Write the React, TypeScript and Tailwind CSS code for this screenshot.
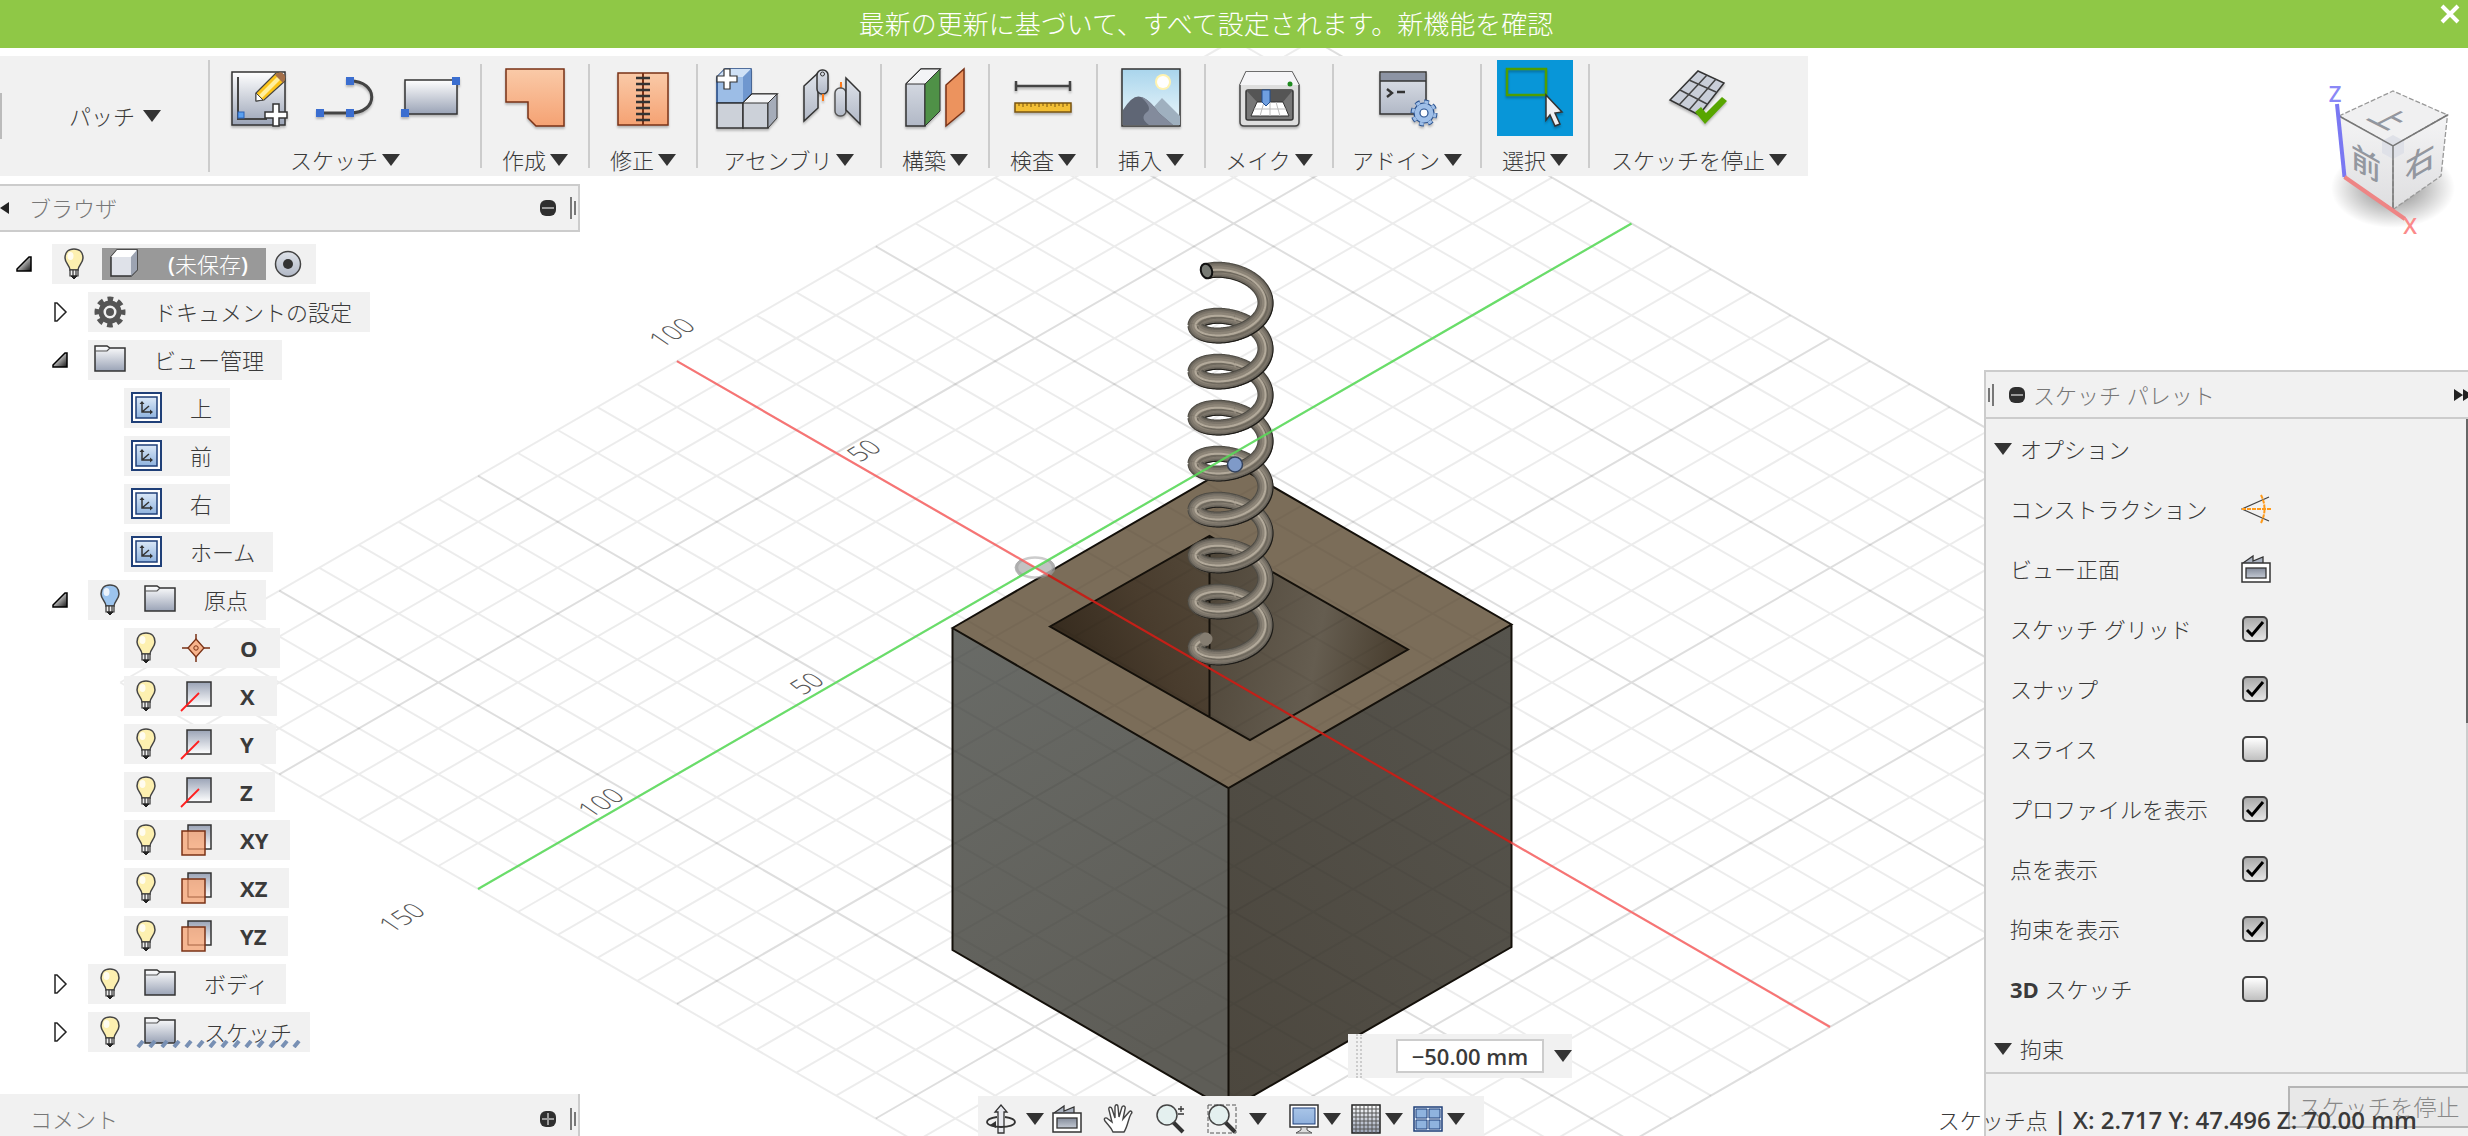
import React from 'react';

// ---------- Small shared glyphs ----------

// Solid downward arrow used next to every drop-down label
const Caret: React.FC = () => (
  <svg width="18" height="12" viewBox="0 0 18 12" className="shrink-0">
    <path d="M0 0H18L9 12Z" fill="#333" />
  </svg>
);

// Round collapse / expand badge in the panel headers
const RoundBadge: React.FC<{ plus?: boolean }> = ({ plus }) => (
  <svg width="16" height="16" viewBox="0 0 16 16">
    <rect width="16" height="16" rx="6" fill="#2f2f2f" />
    <path d={plus ? 'M2 8H14M8 2V14' : 'M2 8H14'} stroke="#9a9a9a" strokeWidth="2" />
  </svg>
);

// Two vertical bars used as a resize grip
const Grip: React.FC<{ flip?: boolean }> = ({ flip }) => (
  <svg width="6" height="22" viewBox="0 0 6 22">
    <path d={flip ? 'M1 4V18M5 0V22' : 'M1 0V22M5 4V18'} stroke="#777" strokeWidth="2" />
  </svg>
);

// ---------- Toolbar icons (60 x 60) ----------

const ICONS: Record<string, React.ReactNode> = {
  sketch: (
    <>
      <rect x="3" y="4" width="53" height="53" fill="url(#steel)" stroke="#333" strokeWidth="1.5" />
      <path d="M9 9V51H38" fill="none" stroke="#444" strokeWidth="2" />
      <rect x="9" y="44" width="6" height="6" fill="#5aa0f0" stroke="#2b62b8" />
      <path d="M27 25L47 5Q52 3 56 9V13L35 32L27 33Z" fill="#fcc419" stroke="#444" strokeWidth="1.2" />
      <path d="M30 27L49 8L52 11L33 30Z" fill="#fff0a0" />
      <path d="M46 7Q52 1 56 8Q57 11 54 15Z" fill="#a5704a" />
      <path d="M27 25L34 32L27 33Z" fill="#fff" stroke="#444" />
      <path d="M44 36H50V44H58V50H50V58H44V50H36V44H44Z" fill="#fff" stroke="#333" strokeWidth="1.5" />
    </>
  ),
  arc: (
    <>
      <path d="M5 45H35C64 45 64 13 35 13" fill="none" stroke="#444" strokeWidth="3" />
      <path d="M1 41h8v8h-8zM31 41h8v8h-8zM31 9h8v8h-8z" fill="#3b6ed0" />
    </>
  ),
  rect: (
    <>
      <rect x="4" y="12" width="52" height="34" fill="url(#steel)" stroke="#333" strokeWidth="1.5" />
      <path d="M0 41h8v8h-8zM51 9h8v8h-8z" fill="#3b6ed0" />
    </>
  ),
  create: <path d="M1 1H59V58H31L23 50V34H1Z" fill="url(#peach)" stroke="#7a3216" strokeWidth="1.5" />,
  modify: (
    <>
      <rect x="5" y="5" width="50" height="52" fill="url(#peach)" stroke="#7a3216" strokeWidth="1.5" />
      <path d="M30 5V57" stroke="#7a3216" strokeWidth="2" />
      <path d="M23 10H37M23 16H37M23 22H37M23 28H37M23 34H37M23 40H37M23 46H37M23 52H37" stroke="#333" strokeWidth="2.4" />
    </>
  ),
  component: (
    <>
      <path d="M1 9L9 1H35V26L27 35H1Z" fill="#9cbde6" stroke="#1d4482" strokeWidth="1.5" />
      <path d="M1 9L9 1H35L27 9Z" fill="#cfe1f6" />
      <path d="M27 9L35 1V26L27 35Z" fill="#6f97cf" />
      <path d="M1 35H27V60H1Z" fill="#ccd1d9" stroke="#333" strokeWidth="1.5" />
      <path d="M27 35L36 26H61L52 35V60H27Z" fill="#ccd1d9" stroke="#333" strokeWidth="1.5" />
      <path d="M27 35L36 26H61L52 35Z" fill="#f4f5f7" stroke="#333" strokeWidth="1" />
      <path d="M52 35L61 26V50L52 60Z" fill="#a5acb9" stroke="#333" strokeWidth="1" />
      <path d="M8 1H14V8H21V14H14V21H8V14H1V8H8Z" fill="#fff" stroke="#333" strokeWidth="1.2" />
    </>
  ),
  joint: (
    <>
      <path d="M2 18L16 5V40L2 53Z" fill="url(#plate)" stroke="#333" strokeWidth="1.5" />
      <rect x="15" y="2" width="11" height="24" rx="5" fill="url(#plate)" stroke="#333" strokeWidth="1.5" />
      <circle cx="20.500" cy="6" r="2" fill="none" stroke="#333" />
      <path d="M21 26V33M39 14V24" stroke="#ff7a1a" strokeWidth="2" />
      <rect x="33" y="20" width="11" height="28" rx="5" fill="url(#plate)" stroke="#555" strokeWidth="1.5" />
      <path d="M44 10L58 24V56L44 42Z" fill="url(#plate)" stroke="#333" strokeWidth="1.5" />
    </>
  ),
  construct: (
    <>
      <path d="M1 16L16 1H35L20 16V58H1Z" fill="url(#plate)" stroke="#333" strokeWidth="1.5" />
      <path d="M1 16L16 1H35L20 16Z" fill="#f3f4f6" stroke="#333" strokeWidth="1" />
      <path d="M20 16L35 1V43L20 58Z" fill="#4f9147" stroke="#333" strokeWidth="1" />
      <path d="M41 17L59 1V43L41 58Z" fill="#ec935e" stroke="#7a3216" strokeWidth="1.5" />
    </>
  ),
  inspect: (
    <>
      <path d="M3 18H57M3 13V23M57 13V23" stroke="#444" strokeWidth="2.500" />
      <rect x="2" y="35" width="56" height="9" fill="#f3bf35" stroke="#7a5410" strokeWidth="1.500" />
      <path d="M6 35v3M10 35v4M14 35v3M18 35v4M22 35v3M26 35v4M30 35v3M34 35v4M38 35v3M42 35v4M46 35v3M50 35v4M54 35v3" stroke="#7a5410" />
    </>
  ),
  insert: (
    <>
      <rect x="1" y="1" width="58" height="57" fill="url(#sky)" stroke="#333" strokeWidth="1.500" />
      <circle cx="42" cy="14" r="8" fill="#fff3b0" />
      <circle cx="42" cy="14" r="6" fill="#fff" />
      <path d="M30 42L41 30L59 48V57H38Z" fill="#9fb0bf" />
      <path d="M2 42Q12 26 20 29Q27 30 38 45L52 57H2Z" fill="#5f6675" />
      <path d="M20 29Q27 30 38 45L52 57H28Q18 50 26 44Q32 40 20 29Z" fill="#838b9c" />
    </>
  ),
  make: (
    <>
      <path d="M7 4H53L60 17V54Q60 58 56 58H5Q1 58 1 54V17Z" fill="#dedede" stroke="#444" strokeWidth="1.500" />
      <path d="M7 4H53L60 17H1Z" fill="#f5f5f7" />
      <circle cx="51" cy="16" r="2.500" fill="#1e8a1e" />
      <rect x="7" y="22" width="47" height="30" rx="2" fill="#777" stroke="#333" strokeWidth="1.500" />
      <path d="M7 22H54L44 34H18Z" fill="#555" />
      <path d="M18 34H44L50 48H12Z" fill="#fff" stroke="#333" />
      <path d="M15 41H47M25 34L21 48M31 34V48M37 34L41 48" stroke="#bbb" />
      <path d="M23 22H31V34L27 38L23 34Z" fill="#6f9fe0" stroke="#234f90" />
    </>
  ),
  addin: (
    <>
      <rect x="3" y="4" width="46" height="42" fill="url(#plate)" stroke="#333" strokeWidth="1.500" />
      <rect x="4" y="5" width="44" height="8" fill="#8d94a4" />
      <path d="M3 13H49" stroke="#333" strokeWidth="1.500" />
      <path d="M10 21L15 25L10 29M20 24H28" fill="none" stroke="#333" strokeWidth="2.400" />
      <circle cx="47" cy="45" r="11" fill="none" stroke="#29518f" strokeWidth="5" strokeDasharray="4.600 4" />
      <circle cx="47" cy="45" r="10" fill="#9fbfe8" stroke="#29518f" strokeWidth="1.200" />
      <circle cx="47" cy="45" r="11" fill="none" stroke="#9fbfe8" strokeWidth="3" strokeDasharray="4 4.600" strokeDashoffset="-0.300" />
      <circle cx="47" cy="45" r="4" fill="#fff" stroke="#29518f" strokeWidth="1.200" />
    </>
  ),
  select: (
    <>
      <rect x="2" y="1" width="39" height="26" fill="none" stroke="#4f9d00" strokeWidth="2.500" />
      <path d="M41 27L57 44L50 45L55 56L50 58L45 47L41 52Z" fill="#f0f0f3" stroke="#333" strokeWidth="1.500" />
    </>
  ),
  stop: (
    <>
      <path d="M29 3L55 15L30 47L1 32Z" fill="#c9ced8" stroke="#333" strokeWidth="1.500" />
      <path d="M20 12L47 24M11 22L38 36M38 7L10 37M47 11L20 42" stroke="#444" strokeWidth="1.500" />
      <path d="M26 44L32 39L37 45L53 29L58 33L36 56Z" fill="#58a600" />
    </>
  ),
};

interface ToolGroup {
  label: string;
  icons: string[];
  width: string;
  active?: boolean;
}

const TOOL_GROUPS: ToolGroup[] = [
  { label: 'スケッチ', icons: ['sketch', 'arc', 'rect'], width: 'w-[272px]' },
  { label: '作成', icons: ['create'], width: 'w-[108px]' },
  { label: '修正', icons: ['modify'], width: 'w-[108px]' },
  { label: 'アセンブリ', icons: ['component', 'joint'], width: 'w-[184px]' },
  { label: '構築', icons: ['construct'], width: 'w-[108px]' },
  { label: '検査', icons: ['inspect'], width: 'w-[108px]' },
  { label: '挿入', icons: ['insert'], width: 'w-[108px]' },
  { label: 'メイク', icons: ['make'], width: 'w-[128px]' },
  { label: 'アドイン', icons: ['addin'], width: 'w-[148px]' },
  { label: '選択', icons: ['select'], width: 'w-[108px]', active: true },
  { label: 'スケッチを停止', icons: ['stop'], width: 'w-[220px]' },
];

const Toolbar: React.FC = () => (
  <nav className="mt-2 flex h-[120px] w-fit items-stretch bg-[#f1f1f1]">
    <div className="my-auto h-[46px] w-[2px] bg-[#bbb]" />
    <div className="flex w-[206px] items-center justify-center pl-7 pr-2">
      <button className="flex items-center gap-2 text-[22px] leading-8">
        パッチ <Caret />
      </button>
    </div>
    {TOOL_GROUPS.map((group, index) => (
      <div key={group.label} className={`flex pt-1 ${group.width}`}>
        <div className={index === 0 ? 'mb-1 w-[2px] bg-[#ccc]' : 'mb-2 mt-1 w-[2px] bg-[#ccc]'} />
        <div className="flex flex-1 flex-col items-center">
          <div className="flex h-[76px] shrink-0 items-center justify-center gap-[26px]">
            {group.icons.map((icon) => (
              <button
                key={icon}
                aria-label={icon}
                className={group.active ? 'flex size-[76px] items-center justify-center bg-[#0896d8]' : 'flex items-center'}
              >
                <svg width="60" height="60" viewBox="0 0 60 60" className="overflow-visible drop-shadow-[0_2px_1px_rgba(0,0,0,0.25)]">
                  {ICONS[icon]}
                </svg>
              </button>
            ))}
          </div>
          <button className="mt-2 flex items-center gap-1 text-[22px] leading-8">
            {group.label}
            <Caret />
          </button>
        </div>
      </div>
    ))}
  </nav>
);

// ---------- Browser tree ----------

const Bulb: React.FC<{ blue?: boolean }> = ({ blue }) => (
  <svg width="32" height="32" viewBox="0 0 32 32">
    <path d="M16 1C10 1 7 5 7 10C7 15 12 18 12 22H20C20 18 25 15 25 10C25 5 22 1 16 1Z" fill={blue ? '#9cc4ee' : '#fdf0b0'} stroke="#444" strokeWidth="1.500" />
    <ellipse cx="12.500" cy="8" rx="3" ry="4" fill="#fff" opacity="0.800" />
    <path d="M12 22H20V28H12ZM15 22V28M18 22V28" fill="#eee" stroke="#333" strokeWidth="1.200" />
    <path d="M13 28H19L16 31Z" fill="#222" stroke="#222" />
  </svg>
);

const Folder: React.FC = () => (
  <svg width="32" height="32" viewBox="0 0 32 32">
    <path d="M1 27V2H13L16 4H31V27Z" fill="url(#steel)" stroke="#333" strokeWidth="1.500" />
    <path d="M1 7H13L16 4" fill="none" stroke="#555" strokeWidth="1.200" />
  </svg>
);

const Gear: React.FC = () => (
  <svg width="32" height="32" viewBox="0 0 32 32">
    <circle cx="16" cy="16" r="13" fill="none" stroke="#555" strokeWidth="5" strokeDasharray="5.600 4.610" strokeDashoffset="2.800" />
    <circle cx="16" cy="16" r="9" fill="none" stroke="#555" strokeWidth="5" />
    <circle cx="16" cy="16" r="4" fill="#555" />
  </svg>
);

const ViewIcon: React.FC = () => (
  <svg width="32" height="32" viewBox="0 0 32 32">
    <rect x="2" y="1" width="29" height="29" fill="#fff" stroke="#1f3f78" strokeWidth="2" />
    <rect x="6" y="5" width="21" height="21" fill="url(#blue)" stroke="#1f3f78" strokeWidth="1.500" />
    <path d="M12 10V20H22M12 20L19 14" fill="none" stroke="#333" strokeWidth="1.500" />
    <path d="M9.500 12L12 9L14.500 12ZM20 17.500L23 20L20 22.500Z" fill="#333" />
  </svg>
);

const OriginIcon: React.FC = () => (
  <svg width="32" height="32" viewBox="0 0 32 32">
    <path d="M16 2V30M2 16H30" stroke="#7a3216" strokeWidth="1.500" />
    <path d="M16 7L24 16L16 25L8 16Z" fill="#f8b48c" stroke="#7a3216" strokeWidth="1.300" />
    <circle cx="16" cy="16" r="2.200" fill="none" stroke="#7a3216" />
  </svg>
);

const AxisIcon: React.FC = () => (
  <svg width="32" height="32" viewBox="0 0 32 32">
    <rect x="7" y="2" width="24" height="24" fill="url(#steelUp)" stroke="#333" strokeWidth="1.500" />
    <path d="M1 31L19 13" stroke="#ff1e1e" strokeWidth="1.800" />
  </svg>
);

const PlaneIcon: React.FC = () => (
  <svg width="32" height="32" viewBox="0 0 32 32">
    <rect x="8" y="1" width="23" height="24" fill="url(#steelUp)" stroke="#333" strokeWidth="1.500" />
    <rect x="2" y="7" width="23" height="24" fill="#f6ab80" fillOpacity="0.850" stroke="#7a3216" strokeWidth="1.500" />
    <path d="M8 7V25H25" fill="none" stroke="#7a3216" strokeOpacity="0.350" />
  </svg>
);

const CubeIcon: React.FC = () => (
  <svg width="32" height="32" viewBox="0 0 32 32">
    <path d="M3 9L9 2H29V22L23 28H3Z" fill="#dfe2e9" stroke="#333" strokeWidth="1.500" />
    <path d="M3 9L9 2H29L23 9Z" fill="#fff" />
    <path d="M23 9L29 2V22L23 28Z" fill="#9ca3b1" />
  </svg>
);

// Open nodes get a filled corner, closed nodes an outlined arrow
const Expander: React.FC<{ open?: boolean }> = ({ open }) =>
  open ? (
    <svg width="16" height="16" viewBox="0 0 16 16">
      <path d="M1 14V13L13 1H15V15H1Z" fill="url(#corner)" stroke="#000" strokeWidth="1.500" />
    </svg>
  ) : (
    <svg width="16" height="20" viewBox="0 0 16 20">
      <path d="M3 1H5L14 10L5 19H3Z" fill="#fff" stroke="#222" strokeWidth="1.500" />
    </svg>
  );

interface TreeRow {
  label: string;
  level: number;
  open?: boolean;
  bulb?: 'yellow' | 'blue';
  icon: React.ReactNode;
  latin?: boolean;
  hatched?: boolean;
}

const TREE: TreeRow[] = [
  { label: 'ドキュメントの設定', level: 1, open: false, icon: <Gear /> },
  { label: 'ビュー管理', level: 1, open: true, icon: <Folder /> },
  { label: '上', level: 2, icon: <ViewIcon /> },
  { label: '前', level: 2, icon: <ViewIcon /> },
  { label: '右', level: 2, icon: <ViewIcon /> },
  { label: 'ホーム', level: 2, icon: <ViewIcon /> },
  { label: '原点', level: 1, open: true, bulb: 'blue', icon: <Folder /> },
  { label: 'O', level: 2, bulb: 'yellow', icon: <OriginIcon />, latin: true },
  { label: 'X', level: 2, bulb: 'yellow', icon: <AxisIcon />, latin: true },
  { label: 'Y', level: 2, bulb: 'yellow', icon: <AxisIcon />, latin: true },
  { label: 'Z', level: 2, bulb: 'yellow', icon: <AxisIcon />, latin: true },
  { label: 'XY', level: 2, bulb: 'yellow', icon: <PlaneIcon />, latin: true },
  { label: 'XZ', level: 2, bulb: 'yellow', icon: <PlaneIcon />, latin: true },
  { label: 'YZ', level: 2, bulb: 'yellow', icon: <PlaneIcon />, latin: true },
  { label: 'ボディ', level: 1, open: false, bulb: 'yellow', icon: <Folder /> },
  { label: 'スケッチ', level: 1, open: false, bulb: 'yellow', icon: <Folder />, hatched: true },
];

const BrowserTree: React.FC = () => (
  <ul className="mt-3 flex flex-col gap-2">
    <li className="flex h-10 items-center pl-4">
      <Expander open />
      <div className="ml-5 flex h-10 items-center bg-[#f1f1f1] pl-[6px] pr-[14px]">
        <Bulb />
        <div className="ml-3 flex h-8 items-center bg-[#999] pl-[6px] pr-[18px] text-[22px] text-white">
          <CubeIcon />
          <span className="ml-7 leading-8">
            <b className="font-semibold">(</b>未保存<b className="font-semibold">)</b>
          </span>
        </div>
        <svg width="28" height="28" viewBox="0 0 28 28" className="ml-2">
          <circle cx="14" cy="14" r="12.500" fill="url(#plate)" stroke="#444" strokeWidth="1.500" />
          <circle cx="14" cy="14" r="5" fill="#333" />
        </svg>
      </div>
    </li>
    {TREE.map((row) => (
      <li key={row.label} className="flex h-10 items-center pl-[52px]">
        <div className="flex w-9 items-center">{row.level === 1 && <Expander open={row.open} />}</div>
        <div
          className={`relative flex h-10 items-center bg-[#f1f1f1] pl-[6px] text-[22px] ${row.latin ? 'pr-[22px]' : 'pr-[18px]'} ${row.level === 2 ? 'ml-9' : ''}`}
        >
          {row.bulb && (
            <span className="mr-[18px]">
              <Bulb blue={row.bulb === 'blue'} />
            </span>
          )}
          {row.icon}
          <span className={`ml-7 leading-8 ${row.latin ? 'font-bold' : ''}`}>{row.label}</span>
          {row.hatched && (
            <svg width="168" height="8" viewBox="0 0 168 8" className="absolute bottom-1 left-12">
              <path
                d="M2 7L7 1M14 7L19 1M26 7L31 1M38 7L43 1M50 7L55 1M62 7L67 1M74 7L79 1M86 7L91 1M98 7L103 1M110 7L115 1M122 7L127 1M134 7L139 1M146 7L151 1M158 7L163 1"
                stroke="#7890b4"
                strokeWidth="4"
              />
            </svg>
          )}
        </div>
      </li>
    ))}
  </ul>
);

const LeftPanel: React.FC = () => (
  <aside className="mt-2 flex w-[580px] flex-1 flex-col">
    <header className="flex h-12 items-center border-y-2 border-r-2 border-[#ccc] bg-[#f1f1f1] text-[22px] text-[#777]">
      <svg width="9" height="12" viewBox="0 0 9 12">
        <path d="M9 0V12L0 6Z" fill="#222" />
      </svg>
      <h2 className="ml-5 flex-1 leading-8">ブラウザ</h2>
      <RoundBadge />
      <span className="ml-[14px] mr-[2px]">
        <Grip />
      </span>
    </header>
    <BrowserTree />
    <header className="mt-auto flex h-[42px] items-center border-r-2 border-[#ccc] bg-[#f1f1f1] pt-2 text-[22px] text-[#777]">
      <h2 className="ml-[30px] flex-1 leading-8">コメント</h2>
      <RoundBadge plus />
      <span className="ml-[14px] mr-[2px]">
        <Grip />
      </span>
    </header>
  </aside>
);

// ---------- Navigation bar ----------

const LookAt: React.FC = () => (
  <svg width="30" height="30" viewBox="0 0 30 30">
    <path d="M2 9L12 2V7L22 3V9" fill="#aab2c0" stroke="#333" strokeWidth="1.300" />
    <rect x="1" y="9" width="28" height="19" fill="#fff" stroke="#333" strokeWidth="1.500" />
    <rect x="5" y="14" width="20" height="10" fill="url(#steelDark)" stroke="#333" strokeWidth="1.300" />
  </svg>
);

const Magnifier: React.FC<{ boxed?: boolean }> = ({ boxed }) => (
  <svg width="30" height="30" viewBox="0 0 30 30">
    {boxed && <path d="M1 1H29V29H1Z" fill="none" stroke="#555" strokeDasharray="4 2" />}
    <path d="M18 18L28 28" stroke="#333" strokeWidth="4" />
    <circle cx="12" cy="11" r="10" fill="#e4f0ef" stroke="#444" strokeWidth="1.500" />
    {!boxed && <path d="M23 5H29M26 2V8M23 10H29" stroke="#333" strokeWidth="1.300" />}
  </svg>
);

const NavBar: React.FC = () => (
  <div className="flex h-10 w-[506px] items-center bg-[#f1f1f1] pl-2 pt-[6px]">
    <button aria-label="orbit">
      <svg width="30" height="30" viewBox="0 0 30 30">
        <path d="M12 29V8H9L15 1L21 8H18V29Z" fill="#e8e9ee" stroke="#333" strokeWidth="1.300" />
        <path d="M11 13C4 14 1 16 1 18C1 21 8 23 15 23C23 23 29 21 29 18C29 16 26 14 19 13" fill="none" stroke="#333" strokeWidth="1.800" />
        <path d="M4 21L10 17V24Z" fill="#333" />
      </svg>
    </button>
    <button aria-label="orbit menu" className="ml-[10px]"><Caret /></button>
    <button aria-label="look at" className="ml-2"><LookAt /></button>
    <button aria-label="pan" className="ml-[21px]">
      <svg width="30" height="30" viewBox="0 0 30 30">
        <path
          d="M10 28C8 23 5 21 2 17C0 14 3 13 5 15L9 18L6 6C5 3 8 2 9 5L12 14L12 3C12 0 15 0 15 3L16 13L19 3C20 1 23 2 22 5L20 15L26 8C28 6 30 8 28 10C25 15 25 22 21 28Z"
          fill="#fff"
          stroke="#444"
          strokeWidth="1.400"
        />
      </svg>
    </button>
    <button aria-label="zoom" className="ml-[22px]"><Magnifier /></button>
    <button aria-label="zoom window" className="ml-[22px]"><Magnifier boxed /></button>
    <button aria-label="zoom menu" className="ml-3"><Caret /></button>
    <button aria-label="display" className="ml-[22px]">
      <svg width="30" height="30" viewBox="0 0 30 30">
        <rect x="1" y="1" width="28" height="22" fill="#fff" stroke="#333" strokeWidth="1.500" />
        <rect x="4" y="4" width="22" height="16" fill="url(#blueFlat)" stroke="#1f3f78" />
        <path d="M12 23H18V26L23 29H7L12 26Z" fill="#ddd" stroke="#555" />
      </svg>
    </button>
    <button aria-label="display menu" className="ml-1"><Caret /></button>
    <button aria-label="grid" className="ml-[10px]">
      <svg width="30" height="30" viewBox="0 0 30 30">
        <rect x="1" y="1" width="28" height="28" fill="url(#steel)" stroke="#222" strokeWidth="1.500" />
        <path d="M5 1V29M9 1V29M13 1V29M17 1V29M21 1V29M25 1V29M1 5H29M1 9H29M1 13H29M1 17H29M1 21H29M1 25H29" stroke="#555" />
      </svg>
    </button>
    <button aria-label="grid menu" className="ml-1"><Caret /></button>
    <button aria-label="viewports" className="ml-[10px]">
      <svg width="30" height="30" viewBox="0 0 30 30">
        <rect x="1" y="3" width="28" height="24" fill="#dce8f6" stroke="#1f3f78" strokeWidth="1.500" />
        <path d="M3 5h11v9h-11zM16 5h11v9h-11zM3 16h11v9h-11zM16 16h11v9h-11z" fill="#8fb3de" stroke="#1f3f78" />
      </svg>
    </button>
    <button aria-label="viewports menu" className="ml-1"><Caret /></button>
  </div>
);

// ---------- Sketch palette ----------

const OPTIONS = [
  { id: 'grid', label: 'スケッチ グリッド', checked: true },
  { id: 'snap', label: 'スナップ', checked: true },
  { id: 'slice', label: 'スライス', checked: false },
  { id: 'profile', label: 'プロファイルを表示', checked: true },
  { id: 'points', label: '点を表示', checked: true },
  { id: 'constraints', label: '拘束を表示', checked: true },
];

const OptionCheck: React.FC<{ id: string; label: React.ReactNode; checked: boolean }> = ({ id, label, checked }) => (
  <div className="flex h-[60px] items-center">
    <label htmlFor={id} className="w-[232px] leading-8">
      {label}
    </label>
    <span className="relative flex">
      <input
        id={id}
        type="checkbox"
        defaultChecked={checked}
        className="peer size-[26px] appearance-none rounded-[5px] border-2 border-[#444] bg-linear-to-b from-white to-[#c0c0c0] checked:from-[#aaa] checked:to-[#e6e6e6]"
      />
      <svg width="26" height="26" viewBox="0 0 26 26" className="pointer-events-none absolute inset-0 hidden peer-checked:block">
        <path d="M5 14L10 19L21 6" fill="none" stroke="#000" strokeWidth="3" />
      </svg>
    </span>
  </div>
);

const SketchPalette: React.FC = () => (
  <aside className="mt-[194px] flex min-h-0 w-[484px] flex-1 flex-col border-l-2 border-t-2 border-[#ccc] bg-[#f1f1f1] text-[22px]">
    <header className="flex h-[47px] shrink-0 items-center border-b-2 border-[#ccc] pl-[2px] text-[#777]">
      <Grip flip />
      <span className="ml-[15px]">
        <RoundBadge />
      </span>
      <h2 className="ml-2 flex-1 leading-8">スケッチ パレット</h2>
      <svg width="14" height="12" viewBox="0 0 14 12">
        <path d="M0 0L9 6L0 12ZM9 0L18 6L9 12Z" fill="#222" />
      </svg>
    </header>
    <div className="flex min-h-0 flex-1 overflow-hidden">
      <div className="flex-1 pl-6">
        <h3 className="-ml-4 flex h-[60px] items-center gap-2 leading-8">
          <Caret /> オプション
        </h3>
        <div className="flex h-[60px] items-center">
          <span className="w-[231px] leading-8">コンストラクション</span>
          <button aria-label="コンストラクション">
            <svg width="30" height="30" viewBox="0 0 30 30">
              <path d="M28 3L1 15L28 27" fill="none" stroke="#444" strokeWidth="1.300" />
              <path d="M1 15H30M20 1Q27 15 20 29" fill="none" stroke="#ff9a1a" strokeWidth="2" strokeDasharray="4 1" />
            </svg>
          </button>
        </div>
        <div className="flex h-[60px] items-center">
          <span className="w-[231px] leading-8">ビュー正面</span>
          <button aria-label="ビュー正面">
            <LookAt />
          </button>
        </div>
        {OPTIONS.map((option) => (
          <OptionCheck key={option.id} {...option} />
        ))}
        <OptionCheck
          id="sketch3d"
          checked={false}
          label={
            <>
              <b className="font-bold">3D</b> スケッチ
            </>
          }
        />
        <h3 className="-ml-4 flex h-[60px] items-center gap-2 leading-8">
          <Caret /> 拘束
        </h3>
      </div>
      {/* Scroll track with the thumb at the top */}
      <div className="w-[2px] bg-[#ccc]">
        <div className="h-[304px] bg-[#666]" />
      </div>
    </div>
    <footer className="flex h-16 shrink-0 items-start justify-end border-t-2 border-[#ccc] pt-3">
      <button className="h-[42px] w-[180px] border-y-2 border-l-2 border-[#b5b5b5] bg-[#e8e8e8] text-[23px] leading-8 text-[#888]">
        スケッチを停止
      </button>
    </footer>
  </aside>
);

// ---------- 3D scene ----------

// Screen position of a point on the sketch plane, one unit = 10 mm
const ORIGIN = { x: 1034.9, y: 567.7 };
const project = (u: number, v: number) => ({
  x: ORIGIN.x + (u + v) * 39.77,
  y: ORIGIN.y + (u - v) * 22.95,
});

const gridPath = (major: boolean) => {
  const parts: string[] = [];
  const add = (u1: number, v1: number, u2: number, v2: number) => {
    const a = project(u1, v1);
    const b = project(u2, v2);
    parts.push(`M${a.x.toFixed(1)} ${a.y.toFixed(1)}L${b.x.toFixed(1)} ${b.y.toFixed(1)}`);
  };
  for (let u = -9; u <= 20; u++) if ((u % 5 === 0) === major) add(u, -14, u, 15);
  for (let v = -14; v <= 15; v++) if ((v % 5 === 0) === major) add(-9, v, 20, v);
  return parts.join('');
};

const GRID_MINOR = gridPath(false);
const GRID_MAJOR = gridPath(true);

// Part of the spring between two angles, 0 is its right side and 90 the front
const helix = (from: number, to: number) => {
  const points: string[] = [];
  for (let deg = from; deg <= to; deg += 3) {
    const t = (deg * Math.PI) / 180;
    const x = 1230.5 + 35 * Math.cos(t);
    const y = 302.6 + 20 * Math.sin(t) + (46 * deg) / 360;
    points.push(`${x.toFixed(2)} ${y.toFixed(2)}`);
  }
  return `M${points.join('L')}`;
};

interface Run {
  edge: string;
  body: string;
}

// The body reaches a little past its edge so that two runs join without a seam
const makeRun = (from: number, to: number): Run => ({
  edge: helix(from, to),
  body: helix(from - 6, to + 6),
});

// Rear halves are painted first, then the front halves from the bottom up
const REAR_RUNS: Run[] = [];
const FRONT_RUNS: Run[] = [];
for (let turn = 7; turn >= 0; turn--) {
  const base = turn * 360;
  REAR_RUNS.push(makeRun(base + 180, turn === 7 ? base + 222 : base + 282));
  FRONT_RUNS.push(turn === 0 ? { edge: helix(-132, 180), body: helix(-132, 186) } : makeRun(base - 78, base + 180));
}

const Coil: React.FC<{ run: Run }> = ({ run }) => (
  <g>
    <path d={run.edge} stroke="#4e4b44" strokeWidth="16" />
    <path d={run.edge} stroke="#1d1b17" strokeWidth="14" transform="translate(1 1)" />
    <path d={run.body} stroke="#69645b" strokeWidth="14" />
    <path d={run.body} stroke="#7d766b" strokeWidth="11" />
    <path d={run.body} stroke="#8d8578" strokeWidth="7" />
    <path d={run.body} stroke="#6f695e" strokeWidth="2" transform="translate(2 2)" />
    <path d={run.body} stroke="#b3aa9b" strokeWidth="2" />
  </g>
);

const GRID_LABELS = [
  { text: '100', x: 671, y: 332 },
  { text: '50', x: 863, y: 450 },
  { text: '50', x: 806, y: 683 },
  { text: '100', x: 600, y: 802 },
  { text: '150', x: 401, y: 917 },
];

const Scene: React.FC = () => (
  <svg viewBox="0 0 2468 1136" preserveAspectRatio="xMidYMid slice" className="absolute inset-0 size-full">
    <defs>
      <linearGradient id="steel" x1="0" y1="0" x2="0" y2="1">
        <stop offset="0" stopColor="#fff" />
        <stop offset="1" stopColor="#9aa3b6" />
      </linearGradient>
      <linearGradient id="steelUp" x1="0" y1="0" x2="0" y2="1">
        <stop offset="0" stopColor="#9aa3b6" />
        <stop offset="1" stopColor="#fff" />
      </linearGradient>
      <linearGradient id="steelDark" x1="0" y1="0" x2="0" y2="1">
        <stop offset="0" stopColor="#838b9a" />
        <stop offset="1" stopColor="#c4cad4" />
      </linearGradient>
      <linearGradient id="plate" x1="0" y1="0" x2="0" y2="1">
        <stop offset="0" stopColor="#dfe3ea" />
        <stop offset="1" stopColor="#b1b8c6" />
      </linearGradient>
      <linearGradient id="peach" x1="0" y1="0" x2="0" y2="1">
        <stop offset="0" stopColor="#facaa8" />
        <stop offset="1" stopColor="#f5a273" />
      </linearGradient>
      <linearGradient id="sky" x1="0" y1="0" x2="0" y2="1">
        <stop offset="0" stopColor="#a9d5ec" />
        <stop offset="1" stopColor="#eef8fc" />
      </linearGradient>
      <linearGradient id="blue" x1="0" y1="0" x2="0" y2="1">
        <stop offset="0" stopColor="#dbe8f7" />
        <stop offset="1" stopColor="#8fb3de" />
      </linearGradient>
      <linearGradient id="blueFlat" x1="0" y1="0" x2="0" y2="1">
        <stop offset="0" stopColor="#a9c5e8" />
        <stop offset="1" stopColor="#8fb0dc" />
      </linearGradient>
      <linearGradient id="corner" x1="0" y1="0" x2="1" y2="1">
        <stop offset="0.300" stopColor="#ddd" />
        <stop offset="1" stopColor="#111" />
      </linearGradient>
      <linearGradient id="faceLeft" x1="0" y1="0" x2="0.400" y2="1">
        <stop offset="0" stopColor="#696b67" />
        <stop offset="1" stopColor="#5e5d57" />
      </linearGradient>
      <linearGradient id="faceRight" x1="1" y1="0" x2="0" y2="1">
        <stop offset="0" stopColor="#56544d" />
        <stop offset="1" stopColor="#4c473e" />
      </linearGradient>
      <linearGradient id="wallLeft" x1="0" y1="0.500" x2="1" y2="0">
        <stop offset="0" stopColor="#362b1e" />
        <stop offset="0.500" stopColor="#493c2d" />
        <stop offset="1" stopColor="#54493a" />
      </linearGradient>
      <linearGradient id="wallRight" x1="0" y1="0.400" x2="1" y2="0.600">
        <stop offset="0" stopColor="#51483b" />
        <stop offset="0.550" stopColor="#655d50" />
        <stop offset="1" stopColor="#453a2b" />
      </linearGradient>
      <radialGradient id="cubeShadow">
        <stop offset="0.300" stopColor="#000" stopOpacity="0.350" />
        <stop offset="1" stopColor="#000" stopOpacity="0" />
      </radialGradient>
      <linearGradient id="cubeFace" x1="0" y1="0" x2="0" y2="1">
        <stop offset="0" stopColor="#f4f4f5" />
        <stop offset="1" stopColor="#dedee0" />
      </linearGradient>
      <clipPath id="boxClip">
        <path d="M952.500 628L1234.500 464.500L1511.500 624.500V947L1228.500 1110L952.500 950Z" />
      </clipPath>
    </defs>

    {/* Sketch grid */}
    <path d={GRID_MINOR} stroke="#000" strokeOpacity="0.075" strokeWidth="2" />
    <path d={GRID_MAJOR} stroke="#000" strokeOpacity="0.130" strokeWidth="2" />

    {GRID_LABELS.map((label) => (
      <text
        key={`${label.x}`}
        transform={`translate(${label.x} ${label.y}) rotate(-30) skewX(25)`}
        textAnchor="middle"
        dominantBaseline="central"
        fontSize="24"
        fill="#555"
      >
        {label.text}
      </text>
    ))}

    {/* Hollow box */}
    <path d="M952.500 628L1228.500 788V1110L952.500 950Z" fill="url(#faceLeft)" />
    <path d="M1511.500 624.500L1228.500 788V1110L1511.500 947Z" fill="url(#faceRight)" />
    <path d="M952.500 628L1234.500 464.500L1511.500 624.500L1228.500 788Z" fill="#7b6d59" />
    <path d="M1050 626.500L1209.500 536V717Z" fill="url(#wallLeft)" />
    <path d="M1209.500 536L1408 649.500L1250 740L1209.500 717Z" fill="url(#wallRight)" />
    <g clipPath="url(#boxClip)" stroke="#000">
      <path d={GRID_MINOR} strokeOpacity="0.040" strokeWidth="2" />
      <path d={GRID_MAJOR} strokeOpacity="0.060" strokeWidth="2" />
    </g>
    <path
      d="M952.500 628L1234.500 464.500L1511.500 624.500L1228.500 788ZM1228.500 788V1110M952.500 628V950L1228.500 1110L1511.500 947V624.500M1050 626.500L1209.500 536L1408 649.500L1250 740ZM1209.500 536V717"
      fill="none"
      stroke="#14100a"
      strokeWidth="2"
    />

    {/* Origin marker */}
    <ellipse cx="1035" cy="567.500" rx="18" ry="10" fill="#fff" fillOpacity="0.600" stroke="#999" strokeOpacity="0.500" strokeWidth="2.500" />
    <path d="M1035 567.500L1020 560Q1010 567 1020 576ZM1035 567.500L1050 560Q1060 567 1050 576Z" fill="#999" fillOpacity="0.600" stroke="#999" strokeOpacity="0.600" />

    {/* Spring */}
    <g fill="none" strokeLinecap="butt" strokeLinejoin="round">
      {REAR_RUNS.map((run) => (
        <Coil key={run.edge} run={run} />
      ))}
      {FRONT_RUNS.map((run) => (
        <Coil key={run.edge} run={run} />
      ))}
    </g>
    <ellipse cx="1206.500" cy="271" rx="5.500" ry="7.500" fill="#777a74" stroke="#111" strokeWidth="2" transform="rotate(-20 1206.500 271)" />
    <circle cx="1206" cy="639" r="6.500" fill="#857d71" />

    {/* Axes */}
    <path d="M676.900 361.100L1048 575" stroke="#ff5050" strokeOpacity="0.750" strokeWidth="2.200" />
    <path d="M1048 575L1511 842.500" stroke="#c42018" strokeWidth="2.200" />
    <path d="M1511 842.500L1830 1027" stroke="#ff5050" strokeOpacity="0.750" strokeWidth="2.200" />
    <path d="M478 889L1631.500 223.500" stroke="#55dd55" strokeOpacity="0.850" strokeWidth="2.200" />
    <circle cx="1235" cy="464.500" r="7.500" fill="#7f9ac8" stroke="#34425c" strokeWidth="1.500" />

    {/* View cube */}
    <ellipse cx="2393" cy="188" rx="62" ry="40" fill="url(#cubeShadow)" />
    <path d="M2339 116L2393 91L2447.500 115L2393 146Z" fill="#f0f0f1" stroke="#999" strokeWidth="1.300" strokeDasharray="5 2" />
    <path d="M2339 116L2393 146V209.500L2344.500 177Z" fill="url(#cubeFace)" />
    <path d="M2447.500 115L2393 146V209.500L2441 176Z" fill="url(#cubeFace)" stroke="#999" strokeWidth="1.300" strokeDasharray="5 2" />
    <path d="M2382 141L2393 135L2404 141V153L2393 159L2382 153Z" fill="#dfe1e8" />
    <path d="M2339 116L2393 146L2447.500 115M2393 146V209.500L2344.500 177" fill="none" stroke="#777" strokeWidth="1.500" />
    <g fill="#93979f" textAnchor="middle" dominantBaseline="central" className="font-medium">
      <text transform="translate(2389 119) rotate(27) skewX(-36)" fontSize="27">上</text>
      <text transform="translate(2366 162) skewY(30)" fontSize="30">前</text>
      <text transform="translate(2420 161) skewY(-30)" fontSize="30">右</text>
    </g>
    <path d="M2337 104L2344.500 177" stroke="#7a78f2" strokeWidth="4" />
    <path d="M2344.500 177L2405 219" stroke="#ee8585" strokeWidth="4" />
    <g fontSize="22" textAnchor="middle" dominantBaseline="central" className="font-semibold">
      <text x="2335" y="93" fill="#8a88f6">Z</text>
      <text x="2410" y="225" fill="#fb8a8a">X</text>
    </g>
  </svg>
);

// ---------- Page ----------

const App: React.FC = () => {
  return (
    <div className="relative flex h-screen min-h-[1100px] flex-col overflow-hidden bg-white font-['Open_Sans','Noto_Sans_CJK_JP',sans-serif] font-light text-[#3a3a3a]">
      <Scene />

      {/* Update notice */}
      <div className="relative flex h-12 shrink-0 items-center bg-[#8fc846] pr-14 text-[26px] text-white">
        <p className="flex-1 text-center leading-8">最新の更新に基づいて、すべて設定されます。新機能を確認</p>
        <button aria-label="閉じる" className="absolute right-2 top-1">
          <svg width="20" height="20" viewBox="0 0 20 20">
            <path d="M2 2L18 18M18 2L2 18" stroke="#fff" strokeWidth="4" />
          </svg>
        </button>
      </div>

      <div className="relative shrink-0">
        <Toolbar />
      </div>

      <main className="relative flex min-h-0 flex-1">
        <div className="flex flex-1 flex-col">
          <LeftPanel />
        </div>

        <div className="relative flex flex-col justify-end pr-[6px]">
          {/* Floating dimension field next to the model */}
          <div className="absolute bottom-[58px] left-[370px] flex h-11 w-[224px] items-center bg-[#f1f1f1]">
            <div className="ml-2 h-11 w-[6px] border-x-2 border-dotted border-[#ccc]" />
            <input
              aria-label="寸法"
              defaultValue="−50.00 mm"
              className="ml-[34px] h-[34px] w-[148px] border-2 border-[#ccc] bg-white text-center text-[22px] font-semibold"
            />
            <button aria-label="寸法メニュー" className="ml-[10px]">
              <Caret />
            </button>
          </div>
          <NavBar />
        </div>

        <div className="flex min-h-0 flex-1 flex-col items-end">
          <SketchPalette />
        </div>

        {/* Cursor read-out, drawn over the palette footer */}
        <p className="pointer-events-none absolute bottom-0 right-[51px] text-[22px] leading-8">
          スケッチ点 <b className="text-[24px] font-semibold">| X: 2.717 Y: 47.496 Z: 70.00 mm</b>
        </p>
      </main>
    </div>
  );
};

export default App;
